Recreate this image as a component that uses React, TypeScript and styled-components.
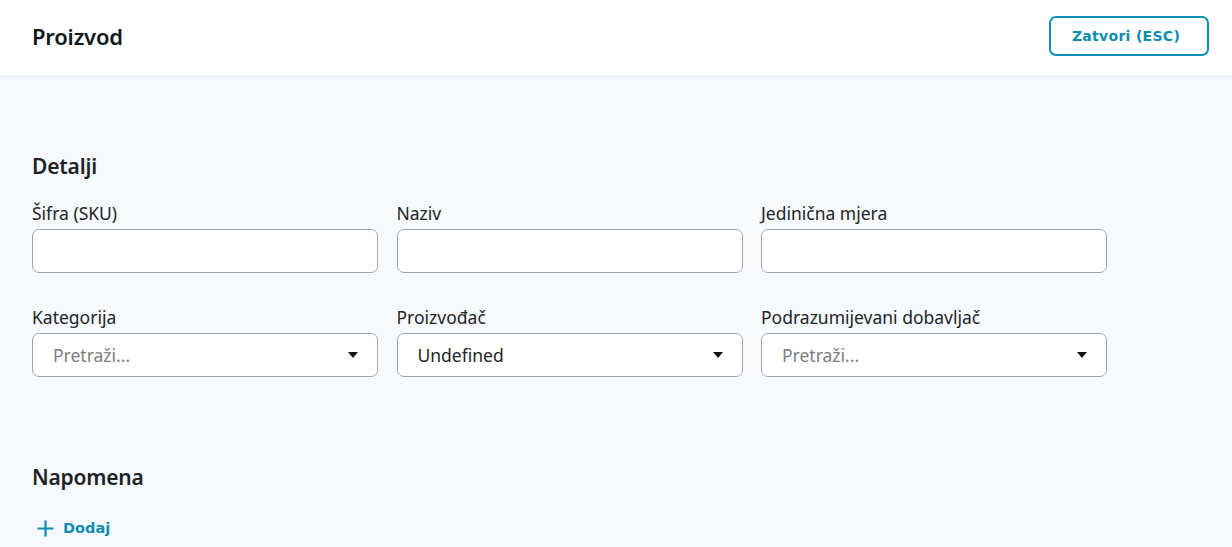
import React from "react";
import styled, { createGlobalStyle } from "styled-components";

const Global = createGlobalStyle`
  html, body { margin: 0; padding: 0; }
  body {
    background: #f6f9fd;
    font-family: "Noto Sans", "Open Sans", sans-serif;
    color: #1f2428;
  }
  * { box-sizing: border-box; }
`;

const Header = styled.header`
  height: 76px;
  background: #ffffff;
  display: flex;
  align-items: center;
  justify-content: space-between;
  padding: 0 23px 0 32px;
  box-shadow: 0 1px 4px rgba(30, 50, 80, 0.08);
  border-bottom: 1px solid #eceff3;
`;

const Title = styled.h1`
  margin: 0 0 4px 0;
  font-size: 22px;
  font-weight: 600;
  letter-spacing: -0.2px;
  color: #12171b;
`;

const CloseButton = styled.button`
  height: 40px;
  width: 160px;
  border: 2px solid #0b93b6;
  border-radius: 7px;
  background: #fff;
  color: #0b8db0;
  font-family: "DejaVu Sans", "Noto Sans", sans-serif;
  font-weight: 700;
  font-size: 14px;
  letter-spacing: 0.3px;
  padding: 0 6px 0 0;
  margin-bottom: 4px;
  cursor: pointer;
`;

const Main = styled.main`
  padding: 76px 32px 0 32px;
`;

const Section = styled.section<{ $gap?: number }>`
  margin-bottom: ${(p) => p.$gap ?? 0}px;
`;

const SectionTitle = styled.h2`
  margin: 0 0 21px 0;
  font-size: 21px;
  font-weight: 600;
  letter-spacing: -0.2px;
  color: #1e2327;
  line-height: 28px;
`;

const Grid = styled.div`
  display: grid;
  grid-template-columns: repeat(3, 346px);
  column-gap: 18.5px;
  row-gap: 32px;
`;

const Field = styled.label`
  display: flex;
  flex-direction: column;
  gap: 4px;
`;

const Label = styled.span`
  font-size: 17.5px;
  line-height: 24px;
  color: #1f2428;
`;

const Input = styled.input`
  height: 44px;
  width: 100%;
  border: 1px solid #a3a7ad;
  border-radius: 7px;
  background: #fff;
  font-family: inherit;
  font-size: 17.5px;
  padding: 0 20px;
  outline: none;
`;

const SelectBox = styled.div`
  height: 44px;
  border: 1px solid #a3a7ad;
  border-radius: 7px;
  background: #fff;
  display: flex;
  align-items: center;
  justify-content: space-between;
  padding: 0 19px 0 20px;
`;

const SelectText = styled.span<{ $placeholder?: boolean }>`
  font-size: 17.5px;
  color: ${(p) => (p.$placeholder ? "#7b7f84" : "#1f2428")};
`;

const Caret = styled.span`
  width: 0;
  height: 0;
  border-left: 5.5px solid transparent;
  border-right: 5.5px solid transparent;
  border-top: 6px solid #121518;
`;

const AddButton = styled.button`
  display: flex;
  align-items: center;
  gap: 9px;
  height: 32px;
  border: 0;
  background: transparent;
  padding: 0 0 0 5px;
  color: #0b8db0;
  font-family: "DejaVu Sans", "Noto Sans", sans-serif;
  font-weight: 700;
  font-size: 14.5px;
  cursor: pointer;
`;

function Select({ value, placeholder }: { value?: string; placeholder?: string }) {
  return (
    <SelectBox>
      <SelectText $placeholder={!value}>{value ?? placeholder}</SelectText>
      <Caret />
    </SelectBox>
  );
}

export default function App() {
  return (
    <>
      <Global />
      <Header>
        <Title>Proizvod</Title>
        <CloseButton>Zatvori (ESC)</CloseButton>
      </Header>
      <Main>
        <Section $gap={86}>
          <SectionTitle>Detalji</SectionTitle>
          <Grid>
            <Field>
              <Label>Šifra (SKU)</Label>
              <Input />
            </Field>
            <Field>
              <Label>Naziv</Label>
              <Input />
            </Field>
            <Field>
              <Label>Jedinična mjera</Label>
              <Input />
            </Field>
            <Field>
              <Label>Kategorija</Label>
              <Select placeholder="Pretraži..." />
            </Field>
            <Field>
              <Label>Proizvođač</Label>
              <Select value="Undefined" />
            </Field>
            <Field>
              <Label>Podrazumijevani dobavljač</Label>
              <Select placeholder="Pretraži..." />
            </Field>
          </Grid>
        </Section>
        <Section>
          <SectionTitle>Napomena</SectionTitle>
          <AddButton>
            <svg width="17" height="17" viewBox="0 0 17 17">
              <path d="M8.5 0.5v16M0.5 8.5h16" stroke="#0b8db0" strokeWidth="2.2" />
            </svg>
            Dodaj
          </AddButton>
        </Section>
      </Main>
    </>
  );
}
